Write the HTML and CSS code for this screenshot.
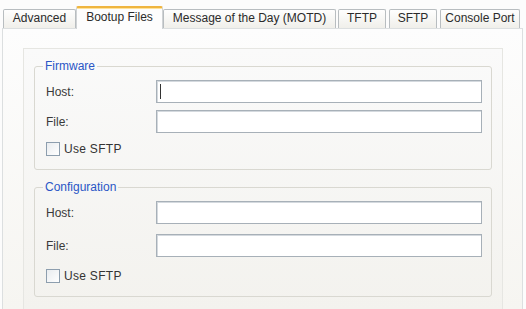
FILE: index.html
```html
<!DOCTYPE html>
<html lang="en">
<head>
<meta charset="UTF-8" />
<title>Bootup Files</title>
<link rel="stylesheet" href="styles.css">
</head>
<body>
<div class="tabs">
    <div class="tab tab-advanced">Advanced</div>
    <div class="tab tab-bootup active">Bootup Files</div>
    <div class="tab tab-motd">Message of the Day (MOTD)</div>
    <div class="tab tab-tftp">TFTP</div>
    <div class="tab tab-sftp">SFTP</div>
    <div class="tab tab-console">Console Port</div>
</div>

<div class="page">
    <div class="pane">
        <fieldset class="group">
            <legend>Firmware</legend>
            <div class="row">
                <span class="label">Host:</span>
                <div class="field"><span class="caret"></span></div>
            </div>
            <div class="row">
                <span class="label">File:</span>
                <div class="field"></div>
            </div>
            <div class="check-row">
                <span class="checkbox"></span>
                <span>Use SFTP</span>
            </div>
        </fieldset>

        <fieldset class="group group-config">
            <legend>Configuration</legend>
            <div class="row">
                <span class="label">Host:</span>
                <div class="field"></div>
            </div>
            <div class="row">
                <span class="label">File:</span>
                <div class="field"></div>
            </div>
            <div class="check-row">
                <span class="checkbox"></span>
                <span>Use SFTP</span>
            </div>
        </fieldset>
    </div>
</div>
</body>
</html>
```

FILE: styles.css
```css
/* XP style property sheet */
body {
    margin: 0;
    font-family: "Liberation Sans", Arial, sans-serif;
    font-size: 12px;
    color: #333;
    background: #fcfcfc;
    height: 309px;
    overflow: hidden;
}

/* Tab strip */
.tabs {
    display: flex;
    align-items: flex-start;
    padding: 9px 0 0 3px;
    height: 19px;
    position: relative;
    z-index: 1;
}

.tab {
    box-sizing: border-box;
    height: 19px;
    line-height: 17px;
    text-align: center;
    color: #2b2b2b;
    border: 1px solid #b8bdc0;
    border-bottom: none;
    border-radius: 2px 2px 0 0;
    background: linear-gradient(#fefefe, #f0efea);
    white-space: nowrap;
}

.tab-advanced { width: 73px; }
.tab-bootup { width: 87px; }
.tab-motd { width: 173px; }
.tab-tftp { width: 48px; margin-left: 2px; }
.tab-sftp { width: 48px; margin-left: 3px; }
.tab-console { width: 80px; margin-left: 3px; }

.tab.active {
    margin-top: -3px;
    height: 23px;
    line-height: 19px;
    background: #fdfdfd;
    border-top: 2px solid #efb540;
    box-shadow: inset 0 1px 0 #ffe39a;
    border-color: #d0d3d5;
    border-top-color: #efb540;
}

/* Page under the tabs */
.page {
    box-sizing: border-box;
    margin: 0 3px 0 2px;
    height: 281px;
    border: 1px solid #dcdfe0;
    border-bottom: none;
    background: linear-gradient(#fdfdfd, #f6f5f1);
    padding: 19px 0 0 20px;
}

.pane {
    box-sizing: border-box;
    width: 480px;
    height: 261px;
    border: 1px solid #e6e6e2;
    border-bottom: none;
    background: linear-gradient(#fafafa, #f3f2ee);
    padding: 10px 10px 0 10px;
}

/* Group boxes */
.group {
    margin: 0;
    padding: 7px 9px 11px 11px;
    border: 1px solid #d9d8d1;
    border-radius: 3px;
    min-width: 0;
}

.group + .group {
    margin-top: 10px;
}

.group legend {
    padding: 0 2px;
    margin-left: -3px;
    line-height: 14px;
    font-size: 12px;
    color: #2a56c6;
}

.row {
    display: flex;
    align-items: center;
    margin-bottom: 7px;
}

.group-config .row {
    margin-bottom: 10px;
}

.label {
    width: 110px;
    color: #3a3a3a;
}

.field {
    flex: 1;
    box-sizing: border-box;
    height: 23px;
    background: #fff;
    border: 1px solid #a7b0b8;
    box-shadow: inset 1px 1px 0 #d4d9de;
    position: relative;
}

.caret {
    position: absolute;
    left: 3px;
    top: 3px;
    width: 1px;
    height: 15px;
    background: #333;
}

.check-row {
    display: flex;
    align-items: center;
    height: 18px;
    margin-top: 2px;
    color: #333;
    letter-spacing: 0.3px;
}

.checkbox {
    box-sizing: border-box;
    width: 14px;
    height: 14px;
    margin-right: 4px;
    border: 1px solid #8d9eae;
    background: linear-gradient(135deg, #e9ecef, #ffffff);
}
```
